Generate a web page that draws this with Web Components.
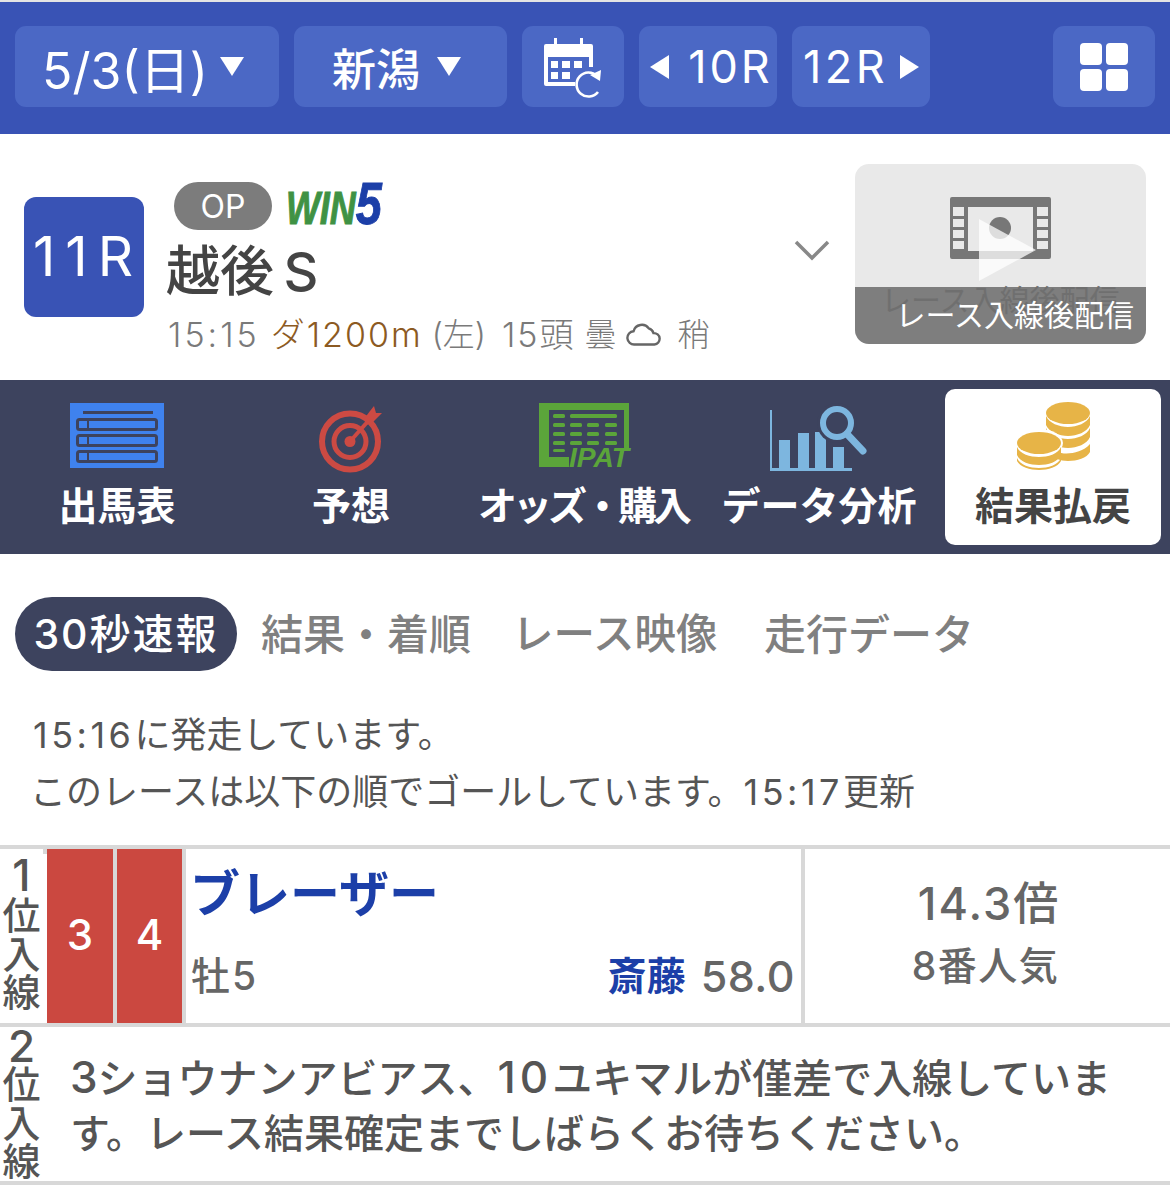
<!DOCTYPE html>
<html lang="ja">
<head>
<meta charset="utf-8">
<title>11R 越後S</title>
<style>
  html, body { margin: 0; background: #fff; }
  body { font-family: Inter, "Noto Sans CJK JP", "Liberation Sans", sans-serif; color: #555; }
  svg { overflow: visible; }
</style>
</head>
<body>
<top-bar>
  <bar-button w="264" gap="12"><span style="font-size:50px;margin-left:-8px">5/3(日)</span><svg width="24" height="19" viewBox="0 0 24 19"><path d="M0 0h24L12 19z" fill="#fff"/></svg></bar-button>
  <bar-button w="213" gap="17" class="venue"><span style="font-size:44px;font-weight:500">新潟</span><svg width="24" height="19" viewBox="0 0 24 19"><path d="M0 0h24L12 19z" fill="#fff"/></svg></bar-button>
  <bar-button w="102">
    <svg width="58" height="60" viewBox="0 0 58 60" fill="#fff">
      <path d="M10 1h3v6h23V1h3v6h8a2 2 0 0 1 2 2v21h-4V20H4v25h27v4H2a2 2 0 0 1-2-2V9a2 2 0 0 1 2-2h8z"/>
      <path d="M7 24h7v7H7zM18 24h8v7h-8zM30 24h8v7h-8zM7 35h7v7H7zM18 35h8v7h-8z"/>
      <path d="M53 39a12 12 0 1 0 1 16" fill="none" stroke="#fff" stroke-width="2.600"/>
      <path d="M46 38l11-5-1 11z"/>
    </svg>
  </bar-button>
  <bar-button w="138" gap="19" class="prev"><svg width="19" height="24" viewBox="0 0 19 24"><path d="M19 0v24L0 12z" fill="#fff"/></svg><span style="font-size:45px;letter-spacing:3px">10R</span></bar-button>
  <bar-button w="138" gap="12"><span style="font-size:45px;letter-spacing:3.500px">12R</span><svg width="19" height="24" viewBox="0 0 19 24"><path d="M0 0v24l19-12z" fill="#fff"/></svg></bar-button>
  <bar-button w="102" class="end">
    <svg width="48" height="48" viewBox="0 0 48 48" fill="#fff"><rect width="22" height="22" rx="4"/><rect x="26" width="22" height="22" rx="4"/><rect y="26" width="22" height="22" rx="4"/><rect x="26" y="26" width="22" height="22" rx="4"/></svg>
  </bar-button>
</top-bar>

<race-head>
  <span slot="no">11R</span>
  <span slot="name">越後 S</span>
  <video-thumb slot="thumb"></video-thumb>
</race-head>

<menu-bar>
  <menu-item>
    <svg viewBox="0 0 96 68" width="96" height="68">
      <rect x="1" y="0" width="94" height="65" fill="#3f82ee"/>
      <rect x="14" y="8" width="70" height="3" fill="#3d435e"/>
      <g fill="none" stroke="#3d435e" stroke-width="3">
        <rect x="8.500" y="16.500" width="79" height="10" rx="2"/><rect x="8.500" y="32.500" width="79" height="10" rx="2"/><rect x="8.500" y="48.500" width="79" height="10" rx="2"/>
        <path d="M19 16v11M19 32v11M19 48v11" stroke-width="2"/>
      </g>
    </svg>
    出馬表
  </menu-item>
  <menu-item>
    <svg viewBox="0 0 96 68" width="96" height="68" style="transform:translateX(-1px)">
      <g fill="none" stroke="#cc4a43">
        <circle cx="48" cy="38.500" r="28" stroke-width="6"/>
        <circle cx="48" cy="38.500" r="16" stroke-width="5"/>
        <path d="M48 38.500L68 16" stroke-width="4"/>
      </g>
      <circle cx="48" cy="38.500" r="5.500" fill="#cc4a43"/>
      <path d="M62 16l6-8 4-5 2 7h6l-10 10-6 2z" fill="#cc4a43"/>
    </svg>
    予想
  </menu-item>
  <menu-item>
    <svg viewBox="0 0 96 68" width="96" height="68">
      <path d="M2 0h90v46h-5V7H12v47h20v10H2z" fill="#5ba53a"/>
      <g fill="#5ba53a">
        <rect x="16" y="11" width="12" height="4" rx="1.500"/><rect x="33" y="11" width="47" height="4" rx="1.500"/>
        <rect x="16" y="20" width="12" height="4" rx="1.500"/><rect x="33" y="20" width="12" height="4" rx="1.500"/><rect x="50" y="20" width="12" height="4" rx="1.500"/><rect x="68" y="20" width="12" height="4" rx="1.500"/>
        <rect x="16" y="29" width="12" height="4" rx="1.500"/><rect x="33" y="29" width="12" height="4" rx="1.500"/><rect x="50" y="29" width="12" height="4" rx="1.500"/><rect x="68" y="29" width="12" height="4" rx="1.500"/>
        <rect x="16" y="38" width="12" height="4" rx="1.500"/><rect x="33" y="38" width="12" height="4" rx="1.500"/><rect x="50" y="38" width="12" height="4" rx="1.500"/><rect x="68" y="38" width="12" height="4" rx="1.500"/>
        <rect x="16" y="46" width="12" height="3" rx="1.500"/>
      </g>
      <text x="32" y="64" font-family="Liberation Sans" font-size="27" font-weight="700" font-style="italic" fill="#5ba53a" textLength="60" lengthAdjust="spacingAndGlyphs">IPAT</text>
    </svg>
    <span style="letter-spacing:-4px;margin-right:4px">オッズ・購入</span>
  </menu-item>
  <menu-item>
    <svg viewBox="0 0 98 68" width="98" height="68">
      <g fill="#7db6df">
        <rect x="0" y="7" width="2" height="61"/><rect y="65" width="82" height="3"/>
        <rect x="9" y="37" width="11" height="28"/><rect x="28" y="30" width="11" height="35"/><rect x="45" y="29" width="11" height="36"/><rect x="63" y="44" width="11" height="21"/>
      </g>
      <circle cx="67" cy="20" r="20" fill="#3d435e"/>
      <circle cx="67" cy="20" r="14" fill="none" stroke="#7db6df" stroke-width="6"/>
      <path d="M77 31l16 17" stroke="#7db6df" stroke-width="7" stroke-linecap="round"/>
    </svg>
    データ分析
  </menu-item>
  <menu-item active>
    <svg viewBox="0 0 96 68" width="96" height="68" style="transform:translateY(-1px)">
      <g fill="#e7b447">
        <ellipse cx="63" cy="11" rx="22" ry="11"/>
        <path d="M41 14c3 7 13 11 22 11s19-4 22-11v9c-3 7-13 11-22 11s-19-4-22-11zM41 26c3 7 13 11 22 11s19-4 22-11v9c-3 7-13 11-22 11s-19-4-22-11zM52 50c8 3 24 2 33-8v8c-3 6-13 9-22 9-4 0-8-1-11-2z"/>
      </g>
      <ellipse cx="34" cy="41" rx="24" ry="14" fill="#fff"/>
      <ellipse cx="34" cy="41" rx="22" ry="11" fill="#e7b447"/>
      <path d="M12 45c3 7 13 10 22 10s19-3 22-10v8c-3 7-13 10-22 10s-19-3-22-10zM12 56c3 7 13 10 22 10s19-3 22-10v3c-3 6-13 9-22 9s-19-3-22-9z" fill="#e7b447"/>
    </svg>
    結果払戻
  </menu-item>
</menu-bar>

<sub-tabs>
  <sub-tab active w="222" size="41"><span style="letter-spacing:2px">30秒速報</span></sub-tab>
  <sub-tab w="251" size="42">結果・着順</sub-tab>
  <sub-tab w="252" size="41.500">レース映像</sub-tab>
  <sub-tab w="206" size="42">走行データ</sub-tab>
</sub-tabs>

<status-note>
  <div><span style="letter-spacing:3.500px">15:16</span>に発走しています。</div>
  <div style="margin-left:-3px">このレースは以下の順でゴールしています。<span style="letter-spacing:3.500px">15:17</span>更新</div>
</status-note>

<result-table>
  <result-row rank="1" pad="5" nh="42">
    <winner-row>
      <span slot="frame">3</span>
      <span slot="no">4</span>
      <span slot="horse">ブレーザー</span>
      <span slot="age">牡5</span>
      <span slot="jockey">斎藤</span>
      <span slot="weight">58.0</span>
      <span slot="odds">14.3倍</span>
      <span slot="pop">8番人気</span>
    </winner-row>
  </result-row>
  <result-row rank="2" pad="0" nh="38">
    <others-note><span style="font-size:44px">3</span>ショウナンアビアス、<span style="font-size:44px;letter-spacing:4px">10</span>ユキマルが僅差で入線していま<br>す。レース結果確定までしばらくお待ちください。</others-note>
  </result-row>
</result-table>

<script>
class ShadowBase extends HTMLElement {
  constructor() {
    super();
    this.attachShadow({ mode: 'open' });
  }
  connectedCallback() {
    this.shadowRoot.innerHTML = this.markup();
  }
}

class TopBar extends ShadowBase {
  markup() {
    return `<style>
      :host { display: flex; gap: 15px; height: 132px; box-sizing: border-box; margin-top: 2px; padding: 24px 15px 0;
        background: #3953b5; box-shadow: 0 -2px 0 #e4e4e4; }
      ::slotted(.end) { margin-left: auto; }
      ::slotted(.venue) { padding-right: 8px; box-sizing: border-box; }
      ::slotted(.prev) { padding-left: 7px; box-sizing: border-box; }
    </style><slot></slot>`;
  }
}

class BarButton extends ShadowBase {
  markup() {
    const w = this.getAttribute('w');
    const gap = this.getAttribute('gap') || 0;
    return `<style>
      :host { display: flex; align-items: center; justify-content: center; gap: ${gap}px; width: ${w}px; height: 81px;
        background: #4b68c5; border-radius: 11px; color: #fff; font-size: 44px; white-space: nowrap; flex: none; }
    </style><slot></slot>`;
  }
}

class RaceHead extends ShadowBase {
  markup() {
    return `<style>
      :host { display: flex; align-items: center; height: 246px; padding-left: 24px; box-sizing: border-box; }
      .no { width: 120px; height: 120px; border-radius: 12px; background: #3953b5; color: #fff; font-size: 55px; letter-spacing: 10px;
        display: flex; align-items: center; justify-content: center; flex: none; padding: 0 0 2px 8px; box-sizing: border-box; }
      .info { margin-left: 22px; width: 604px; flex: none; display: flex; flex-direction: column; align-self: flex-start; padding-top: 48px; }
      .tags { display: flex; align-items: center; gap: 14px; margin-left: 8px; height: 48px; }
      .op { width: 98px; height: 48px; border-radius: 24px; background: #7c7c7c; color: #fff; font-size: 32px;
        display: flex; align-items: center; justify-content: center; }
      .win { font: italic 700 46px/48px "Liberation Sans", sans-serif; color: #3f9244; transform: scaleX(.78); transform-origin: left; white-space: nowrap; display: block; width: 96px; -webkit-text-stroke: 1px currentColor; }
      .win b { color: #1c3fa8; font-size: 60px; }
      .name { font-size: 54px; font-weight: 500; line-height: 70px; color: #444; margin-top: 7px; white-space: nowrap; word-spacing: -5px; }
      .meta { font-size: 32px; font-weight: 300; color: #7a7a7a; line-height: 44px; margin: 6px 0 0 2px; white-space: nowrap; display: flex; align-items: center; }
      .meta .t { font-size: 34px; letter-spacing: 3px; }
      .meta em { font-style: normal; color: #8c5a22; font-size: 34px; letter-spacing: 2px; margin-left: 11px; }
      .meta .c { font-size: 34px; letter-spacing: 2px; margin-left: 16px; }
      .chev { margin-left: 25px; width: 36px; flex: none; transform: translate(-1px, -7px); }
      .thumb { margin-left: 24px; align-self: flex-start; margin-top: 30px; }
    </style>
    <div class="no"><slot name="no"></slot></div>
    <div class="info">
      <div class="tags"><span class="op">OP</span><span class="win">WIN<b>5</b></span></div>
      <div class="name"><slot name="name"></slot></div>
      <div class="meta"><span class="t">15:15</span><em>ダ1200m</em><span style="margin-left:9px">(左)</span><span class="c">15頭</span><span style="margin-left:9px">曇</span>
        <svg width="36" height="24" viewBox="0 0 38 24" fill="none" stroke="#666" stroke-width="2.500" style="margin-left:9px"><path d="M9 22a7 7 0 0 1-1-14 9 9 0 0 1 16-3 7 7 0 0 1 5 5 6 6 0 0 1 1 12z"/></svg>
        <span style="margin-left:16px">稍</span></div>
    </div>
    <svg class="chev" height="22" viewBox="0 0 36 22" fill="none" stroke="#888" stroke-width="3.500"><path d="M2 3l16 16L34 3"/></svg>
    <div class="thumb"><slot name="thumb"></slot></div>`;
  }
}

class VideoThumb extends ShadowBase {
  markup() {
    return `<style>
      :host { display: block; position: relative; width: 291px; height: 180px; background: #e9e9e9; border-radius: 14px; overflow: hidden; }
      svg { position: absolute; left: 95px; top: 33px; }
      .ghost { position: absolute; left: 26px; top: 116px; font-size: 30px; line-height: 40px; color: #777; white-space: nowrap; }
      .bar { position: absolute; left: 0; right: 0; bottom: 0; height: 57px; background: rgba(110,110,110,.88); color: #fff;
        font-size: 30px; line-height: 56px; text-align: right; padding-right: 12px; white-space: nowrap; }
    </style>
    <svg width="101" height="95" viewBox="0 0 101 95">
      <path fill="#777" fill-rule="evenodd" d="M2 0h97a2 2 0 0 1 2 2v58a2 2 0 0 1-2 2H2a2 2 0 0 1-2-2V2a2 2 0 0 1 2-2zM3 10v9h11v-9zM3 22v8h11v-8zM3 33v8h11v-8zM3 44v8h11v-8zM87 10v9h11v-9zM87 22v8h11v-8zM87 33v8h11v-8zM87 44v8h11v-8zM18 10v44h65V10z"/>
      <circle cx="50" cy="31" r="11" fill="#777"/>
      <path d="M29 22l57 31-57 31z" fill="#fff" fill-opacity=".75"/>
    </svg>
    <div class="ghost">レース入線後配信</div>
    <div class="bar">レース入線後配信</div>`;
  }
}

class MenuBar extends ShadowBase {
  markup() {
    return `<style>
      :host { display: grid; grid-template-columns: repeat(5, 234px); height: 174px; background: #3d435e; }
    </style><slot></slot>`;
  }
}

class MenuItem extends ShadowBase {
  markup() {
    const on = this.hasAttribute('active');
    return `<style>
      :host { display: flex; flex-direction: column; align-items: center; margin: 9px; padding-top: 14px; box-sizing: border-box; gap: 8px;
        border-radius: 10px; font-size: 39px; font-weight: 700; line-height: 54px; white-space: nowrap;
        background: ${on ? '#fff' : 'transparent'}; color: ${on ? '#444' : '#fff'}; }
    </style><slot></slot>`;
  }
}

class SubTabs extends ShadowBase {
  markup() {
    return `<style>
      :host { display: flex; padding: 43px 0 0 15px; height: 117px; box-sizing: border-box; }
    </style><slot></slot>`;
  }
}

class SubTab extends ShadowBase {
  markup() {
    const on = this.hasAttribute('active');
    const w = this.getAttribute('w');
    const size = this.getAttribute('size') || 41;
    return `<style>
      :host { display: flex; align-items: center; ${on ? 'justify-content: center;' : 'padding-left: 24px;'} box-sizing: border-box; width: ${w}px; height: 74px; flex: none; padding-bottom: 6px;
        border-radius: 37px; font-size: ${size}px; font-weight: 500; white-space: nowrap;
        background: ${on ? '#3d435e' : 'transparent'}; color: ${on ? '#fff' : '#808080'}; }
    </style><slot></slot>`;
  }
}

class StatusNote extends ShadowBase {
  markup() {
    return `<style>
      :host { display: block; padding: 36px 0 0 33px; height: 175px; box-sizing: border-box; font-size: 36px; line-height: 57px; font-weight: 400; color: #555; white-space: nowrap; }
      ::slotted(div) { height: 57px; }
    </style><slot></slot>`;
  }
}

class ResultTable extends ShadowBase {
  markup() {
    return `<style>
      :host { display: block; border-top: 4px solid #d8d8d8; margin-top: -1px; }
    </style><slot></slot>`;
  }
}

class ResultRow extends ShadowBase {
  markup() {
    return `<style>
      :host { display: flex; border-bottom: 4px solid #d8d8d8; }
      .rank { flex: none; border-right: 4px solid #d8d8d8; font-size: 38px; font-weight: 500; text-align: center; color: #555;
        padding-top: ${this.getAttribute('pad')}px; box-sizing: border-box; width: 47px; height: 0; min-height: 100%; }
      .rank div { height: 38.500px; line-height: 38.500px; }
      .rank .n { height: ${this.getAttribute('nh')}px; font-size: 44px; line-height: ${this.getAttribute('nh')}px; }
      .body { flex: 1; min-width: 0; }
    </style>
    <div class="rank"><div class="n">${this.getAttribute('rank')}</div><div>位</div><div>入</div><div>線</div></div>
    <div class="body"><slot></slot></div>`;
  }
}

class WinnerRow extends ShadowBase {
  markup() {
    return `<style>
      :host { display: flex; height: 174px; }
      .gate { width: 70px; flex: none; box-sizing: border-box; background: #cb4840; color: #fff; font-size: 42px; font-weight: 500; display: flex; align-items: center; justify-content: center; border-right: 4px solid #d8d8d8; padding-bottom: 4px; }
      .gate + .gate { width: 69px; }
      .main { width: 615px; flex: none; box-sizing: border-box; padding: 0 6px; display: flex; flex-direction: column; }
      .horse { font-size: 50px; font-weight: 700; color: #1c3fa8; line-height: 70px; margin: 10px 0 0 -2px; white-space: nowrap; }
      .sub { display: flex; align-items: center; margin-top: 20px; line-height: 54px; color: #666; }
      .age { font-size: 39px; font-weight: 500; letter-spacing: 2px; margin-left: -1px; }
      .jk { margin-left: auto; font-size: 39px; font-weight: 700; color: #1c3fa8; }
      .wt { margin-left: 15px; font-size: 43px; font-weight: 500; letter-spacing: .5px; }
      .odds { flex: 1; border-left: 4px solid #d8d8d8; display: flex; flex-direction: column; align-items: center; color: #666; font-weight: 500; padding-top: 24px; }
      .o { font-size: 45px; line-height: 62px; letter-spacing: 2px; margin-left: 3px; }
      .p { font-size: 39px; line-height: 62px; margin-left: -4px; letter-spacing: 1.500px; }
    </style>
    <div class="gate"><slot name="frame"></slot></div>
    <div class="gate"><slot name="no"></slot></div>
    <div class="main">
      <div class="horse"><slot name="horse"></slot></div>
      <div class="sub"><span class="age"><slot name="age"></slot></span><span class="jk"><slot name="jockey"></slot></span><span class="wt"><slot name="weight"></slot></span></div>
    </div>
    <div class="odds"><div class="o"><slot name="odds"></slot></div><div class="p"><slot name="pop"></slot></div></div>`;
  }
}

class OthersNote extends ShadowBase {
  markup() {
    return `<style>
      :host { display: block; height: 154px; box-sizing: border-box; padding: 23px 0 0 23px; font-size: 40px; line-height: 55px; font-weight: 500; color: #555; white-space: nowrap; }
    </style><slot></slot>`;
  }
}

customElements.define('top-bar', TopBar);
customElements.define('bar-button', BarButton);
customElements.define('race-head', RaceHead);
customElements.define('video-thumb', VideoThumb);
customElements.define('menu-bar', MenuBar);
customElements.define('menu-item', MenuItem);
customElements.define('sub-tabs', SubTabs);
customElements.define('sub-tab', SubTab);
customElements.define('status-note', StatusNote);
customElements.define('result-table', ResultTable);
customElements.define('result-row', ResultRow);
customElements.define('winner-row', WinnerRow);
customElements.define('others-note', OthersNote);
</script>
</body>
</html>
